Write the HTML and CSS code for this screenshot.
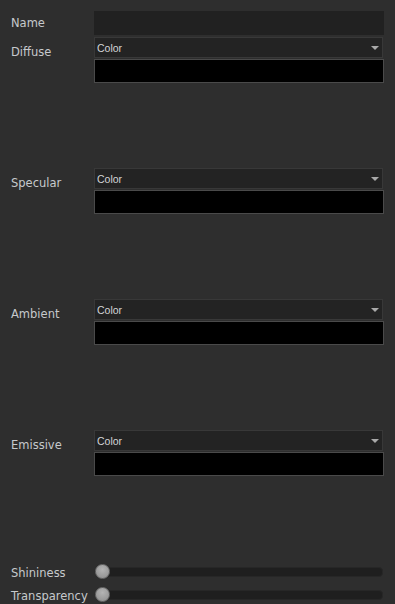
FILE: index.html
```html
<!DOCTYPE html>
<html lang="en">

<head>
    <meta charset="UTF-8">
    <meta name="viewport" content="width=device-width, initial-scale=1.0">
    <title>Material</title>
    <link rel="stylesheet" href="styles.css">
</head>

<body>
    <div class="panel">

        <div class="row name-row">
            <label class="label">Name</label>
            <div class="field"><input type="text" class="text-input"></div>
        </div>

        <div class="row group">
            <label class="label">Diffuse</label>
            <div class="field">
                <div class="select">Color<span class="arrow"></span></div>
                <div class="swatch"></div>
            </div>
        </div>

        <div class="row group">
            <label class="label">Specular</label>
            <div class="field">
                <div class="select">Color<span class="arrow"></span></div>
                <div class="swatch"></div>
            </div>
        </div>

        <div class="row group">
            <label class="label">Ambient</label>
            <div class="field">
                <div class="select">Color<span class="arrow"></span></div>
                <div class="swatch"></div>
            </div>
        </div>

        <div class="row group last">
            <label class="label">Emissive</label>
            <div class="field">
                <div class="select">Color<span class="arrow"></span></div>
                <div class="swatch"></div>
            </div>
        </div>

        <div class="row slider-row">
            <label class="label">Shininess</label>
            <div class="field">
                <div class="track"><span class="knob"></span></div>
            </div>
        </div>

        <div class="row slider-row">
            <label class="label">Transparency</label>
            <div class="field">
                <div class="track"><span class="knob"></span></div>
            </div>
        </div>

    </div>
</body>

</html>
```

FILE: styles.css
```css
html,
body {
    margin: 0;
    height: 100%;
    background: #2e2e2e;
}

.panel {
    padding: 11px 11px 0 11px;
    font-family: "DejaVu Sans", Verdana, sans-serif;
    font-size: 11.5px;
    color: #c6c9cc;
}

.row {
    display: flex;
}

.label {
    width: 83px;
    flex: none;
    line-height: 14px;
    white-space: nowrap;
}

.field {
    flex: 1;
    display: flex;
    flex-direction: column;
}

/* name */
.name-row {
    align-items: center;
}

.text-input {
    display: block;
    box-sizing: border-box;
    width: 100%;
    height: 24px;
    margin: 0;
    border: none;
    background: #212121;
    outline: none;
}

/* color groups */
.group {
    margin-top: 2px;
    margin-bottom: 85px;
}

.group .label {
    padding-top: 8px;
}

.group.last {
    margin-bottom: 84px;
}

.select {
    position: relative;
    box-sizing: border-box;
    height: 21px;
    width: 289px;
    padding: 2px 0 0 2px;
    border: 1px solid #383838;
    background: #232323;
    font-family: "Liberation Sans", Arial, sans-serif;
    font-size: 10.5px;
    line-height: 17px;
    color: #d2d4d6;
}

.arrow {
    position: absolute;
    right: 3px;
    top: 8px;
    width: 0;
    height: 0;
    border-left: 4px solid transparent;
    border-right: 4px solid transparent;
    border-top: 4px solid #a9a9a9;
}

.swatch {
    box-sizing: border-box;
    height: 24px;
    margin-top: 1px;
    border: 1px solid #4a4a4a;
    background: #000;
}

/* sliders */
.slider-row {
    align-items: center;
    height: 23px;
}

.slider-row .label {
    padding-top: 2px;
}

.track {
    position: relative;
    box-sizing: border-box;
    height: 10px;
    margin-left: 2px;
    margin-right: 1px;
    border: 1px solid #272727;
    border-radius: 4px;
    background: #1f1f1f;
}

.knob {
    position: absolute;
    left: -2px;
    top: -4px;
    width: 15px;
    height: 15px;
    box-sizing: border-box;
    border-radius: 50%;
    border: 1px solid #6c6c6c;
    background: radial-gradient(circle at 50% 35%, #b4b4b4 0%, #9c9c9c 60%, #8a8a8a 100%);
}
```
